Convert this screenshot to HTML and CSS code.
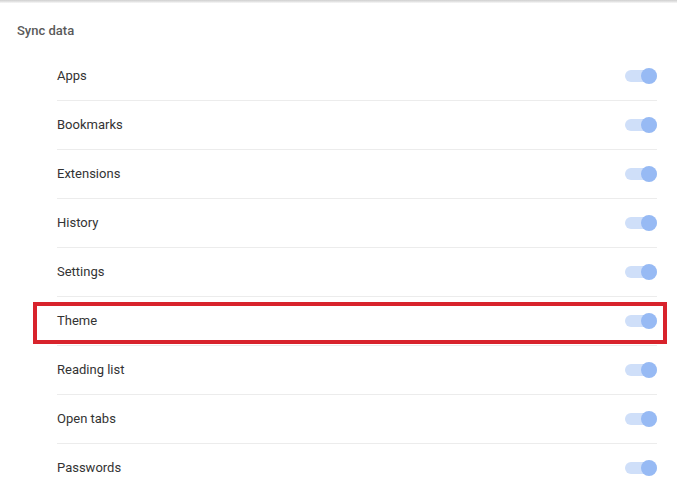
FILE: index.html
```html
<!DOCTYPE html>
<html>
<head>
<meta charset="utf-8">
<link rel="stylesheet" href="styles.css">
</head>
<body>
<div class="topshadow"></div>
<div class="page">
  <div class="section-title">Sync data</div>
  <ul class="list">
    <li class="row"><span class="label">Apps</span><span class="toggle"><span class="knob"></span></span></li>
    <li class="row"><span class="label">Bookmarks</span><span class="toggle"><span class="knob"></span></span></li>
    <li class="row"><span class="label">Extensions</span><span class="toggle"><span class="knob"></span></span></li>
    <li class="row"><span class="label">History</span><span class="toggle"><span class="knob"></span></span></li>
    <li class="row"><span class="label">Settings</span><span class="toggle"><span class="knob"></span></span></li>
    <li class="row"><span class="label">Theme</span><span class="toggle"><span class="knob"></span></span></li>
    <li class="row"><span class="label">Reading list</span><span class="toggle"><span class="knob"></span></span></li>
    <li class="row"><span class="label">Open tabs</span><span class="toggle"><span class="knob"></span></span></li>
    <li class="row last"><span class="label">Passwords</span><span class="toggle"><span class="knob"></span></span></li>
  </ul>
  <div class="highlight"></div>
</div>
</body>
</html>
```
FILE: styles.css
```css
html, body {
  margin: 0;
  padding: 0;
  background: #ffffff;
  font-family: Roboto, "Liberation Sans", sans-serif;
  font-size: 13px;
  overflow: hidden;
}
.topshadow {
  height: 3px;
  background: linear-gradient(#cfcfcf, #e6e6e6 60%, #f8f8f8);
}
.page {
  position: relative;
}
.section-title {
  height: 49px;
  line-height: 56px;
  padding-left: 17px;
  color: #5a5a5a;
  font-weight: 500;
  box-sizing: border-box;
}
.list {
  list-style: none;
  margin: 0 20px 0 57px;
  padding: 0;
}
.row {
  height: 48px;
  display: flex;
  align-items: center;
  justify-content: space-between;
  border-bottom: 1px solid #ececec;
  color: #333333;
}
.row.last {
  border-bottom: none;
}
.label {
  margin-bottom: 2px;
}
.toggle {
  position: relative;
  width: 32px;
  height: 12px;
  border-radius: 6px;
  background: #cfdff9;
}
.knob {
  position: absolute;
  right: 0;
  top: -2px;
  width: 16px;
  height: 16px;
  border-radius: 50%;
  background: #97baf4;
}
.highlight {
  position: absolute;
  left: 33px;
  top: 299px;
  width: 634px;
  height: 42px;
  border: 4px solid #d8232c;
  box-sizing: border-box;
}
```
